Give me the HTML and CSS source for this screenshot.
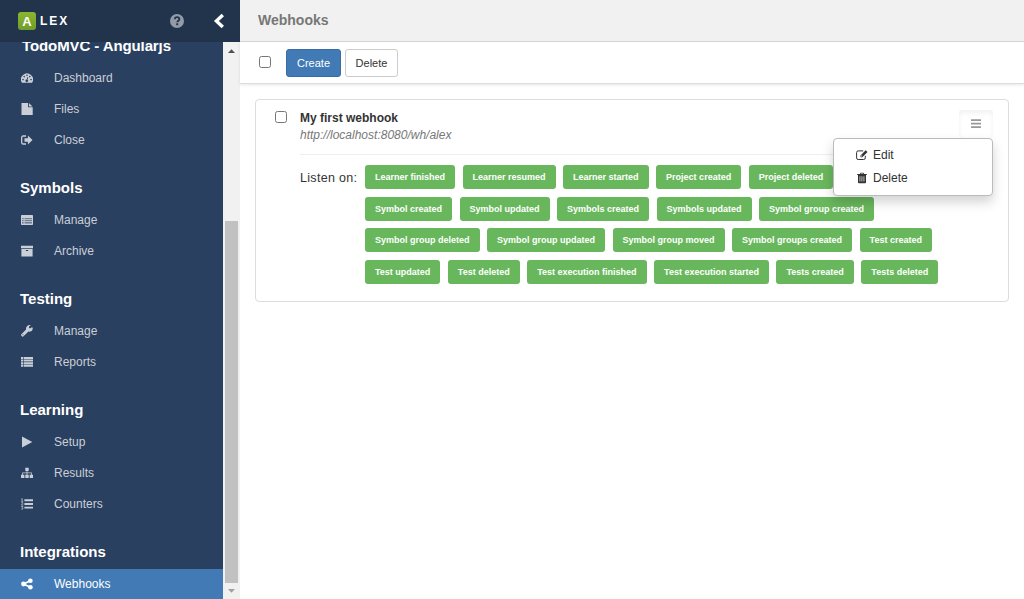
FILE: index.html
```
<!DOCTYPE html>
<html lang="en">
<head>
<meta charset="utf-8">
<title>Webhooks</title>
<link rel="stylesheet" href="styles.css">
</head>
<body>
<div class="app">
  <aside class="sidebar">
    <header class="brand">
      <span class="logo">A</span><span class="brand-name">LEX</span>
      <svg class="help" viewBox="0 0 14 14"><circle cx="7" cy="7" r="7" fill="#929ba7"/><path d="M4.8 5.3C4.9 3.9 5.8 3.2 7 3.2s2.4.8 2.4 2c0 1.6-2.1 1.5-2.1 3.1" fill="none" stroke="#21344c" stroke-width="1.8"/><path d="M6.2 9.3h2v1.9h-2z" fill="#21344c"/></svg>
      <svg class="collapse" viewBox="0 0 12 16"><path d="M9.8 1.9 3.4 8l6.4 6.1" fill="none" stroke="#fff" stroke-width="3.4"/></svg>
    </header>
    <div class="side-body">
      <nav class="nav">
        <h2 class="project">TodoMVC - Angularjs</h2>
        <a class="item"><svg class="icon" viewBox="0 0 12 12"><path fill-rule="evenodd" d="M1 10.8A6 6 0 1 1 11 10.8zM1.2 7.6a.8.8 0 1 0 1.6 0 .8.8 0 0 0-1.6 0M2.4 4.6a.8.8 0 1 0 1.6 0 .8.8 0 0 0-1.6 0M5.2 3.3a.8.8 0 1 0 1.6 0 .8.8 0 0 0-1.6 0M8 4.6a.8.8 0 1 0 1.6 0 .8.8 0 0 0-1.6 0M9.2 7.6a.8.8 0 1 0 1.6 0 .8.8 0 0 0-1.6 0M6.5 4.9 5.7 7.5a1.3 1.3 0 1 0 .8.2l.8-2.6z"/></svg>Dashboard</a>
        <a class="item"><svg class="icon" viewBox="0 0 12 12"><path d="M.5 0H7v4.300h4.700V12H.500zM7.900.1l3.600 3.300H7.900z"/></svg>Files</a>
        <a class="item"><svg class="icon" viewBox="0 0 12 12"><path d="M5 2H2.3Q.7 2 .7 3.600v4.800Q.7 10 2.300 10H5" fill="none" stroke="currentColor" stroke-width="1.300"/><path d="M3.500 4.300h3.400V1.500L11.500 6l-4.600 4.500V7.700H3.500z"/></svg>Close</a>
        <h2>Symbols</h2>
        <a class="item"><svg class="icon" viewBox="0 0 12 12"><path fill-rule="evenodd" d="M.8 1h10.4q.8 0 .8.8v8.400q0 .8-.8.8H.8q-.8 0-.8-.8V1.800Q0 1 .8 1zM1 4v1.200h10V4zM1 6v1.200h10V6zM1 8v1.500h10V8z"/><path d="M2.700 3.500h.8v6.500h-.8z"/><path d="M1 3.800h10v6H1z" opacity=".45"/></svg>Manage</a>
        <a class="item"><svg class="icon" viewBox="0 0 12 12"><path fill-rule="evenodd" d="M0 .8h12v2.500H0zM.4 4h11.200v7.500H.4zM4.900 5v.9h2.300V5z"/></svg>Archive</a>
        <h2>Testing</h2>
        <a class="item"><svg class="icon" viewBox="0 0 12 12"><path fill-rule="evenodd" d="M10.900 2.300 9 3.400 8 2.800V1.600l1.900-1.100A3.400 3.400 0 0 0 5.100 4.400L.6 8.900a1.500 1.500 0 0 0 2.200 2.200L7.400 6.600A3.400 3.400 0 0 0 11.700 3q-.1-.6-.8-.7zM1.500 9.700a.5.5 0 1 0 1 0 .5.5 0 0 0-1 0"/></svg>Manage</a>
        <a class="item"><svg class="icon" viewBox="0 0 12 12"><path d="M0 1h2v2H0zm2.600 0H12v2H2.600zM0 3.600h2v2H0zm2.600 0H12v2H2.600zM0 6.200h2v2H0zm2.600 0H12v2H2.600zM0 8.800h2v2H0zm2.600 0H12v2H2.600z"/></svg>Reports</a>
        <h2>Learning</h2>
        <a class="item"><svg class="icon" viewBox="0 0 12 12"><path d="M1 .5 11.300 6 1 11.500z"/></svg>Setup</a>
        <a class="item"><svg class="icon" viewBox="0 0 12 12"><path d="M4.300.8h3.400v3.300H6.400v1.300h4.400v2.300H12v3.200H8.600V7.700H10V6.200H6.400v1.500h1.300v3.200H4.300V7.700h1.300V6.200H2v1.500h1.400v3.200H0V7.700h1.200V5.400h4.400V4.100H4.300z"/></svg>Results</a>
        <a class="item"><svg class="icon" viewBox="0 0 12 12"><path d="M3.400 1.300H12v1.900H3.400zm0 3.700H12v1.900H3.400zm0 3.700H12v1.900H3.400z"/><path d="M.2 1.200 1.200.6v2.700M.2 3.400h2M.2 4.900q2-.8 1.800.3L.4 7.100h1.900M.2 8.500h1.700l-.9 1q1.500.4.800 1.500-.7.7-1.600.1" fill="none" stroke="currentColor" stroke-width=".7"/></svg>Counters</a>
        <h2>Integrations</h2>
        <a class="item active"><svg class="icon" viewBox="0 0 12 12"><circle cx="2.500" cy="6" r="2.400"/><circle cx="9.400" cy="2.800" r="2.300"/><circle cx="9.400" cy="9.200" r="2.300"/><path d="M9.300 2.800 2.600 6l6.700 3.200" fill="none" stroke="currentColor" stroke-width="1.700"/></svg>Webhooks</a>
      </nav>
      <div class="scrollbar">
        <svg class="arrow" viewBox="0 0 17 17"><path d="M5 11h7L8.500 7.300z" fill="#505050"/></svg>
        <div class="track"><div class="thumb"></div></div>
        <svg class="arrow" viewBox="0 0 17 17"><path d="M5 7h7l-3.500 3.800z" fill="#a0a0a0"/></svg>
      </div>
    </div>
  </aside>
  <main class="main">
    <header class="title">Webhooks</header>
    <div class="toolbar">
      <span class="check"></span>
      <button class="btn primary">Create</button>
      <button class="btn">Delete</button>
    </div>
    <section class="card">
      <span class="check"></span>
      <div class="content">
        <div class="head">
          <div class="info"><div class="name">My first webhook</div><div class="url">http://localhost:8080/wh/alex</div></div>
          <div class="menu-wrap">
            <button class="menu-btn"><svg viewBox="0 0 10 9"><path d="M0 .2h10v1.700H0zm0 3.500h10v1.700H0zm0 3.500h10v1.700H0z" fill="#999"/></svg></button>
            <div class="dropdown">
              <a class="option"><svg viewBox="0 0 12 12"><path d="M9.300 6.800v2.100q0 1.600-1.600 1.600H2.200Q.6 10.500.6 8.900V3.500Q.6 1.900 2.200 1.900h5" fill="none" stroke="#333" stroke-width="1"/><path fill-rule="evenodd" d="M4.500 6.400 9.700 1.200l1.800 1.800-5.200 5.200H4.500zM5.200 6.700v.8h.8l.4-.4-.8-.8z" fill="#333"/></svg>Edit</a>
              <a class="option"><svg viewBox="0 0 12 12"><path fill-rule="evenodd" d="M4 1.900 4.500.7h3L8 1.900h2.800v1H10v7.300q0 1-.9 1H2.900q-.9 0-.9-1V2.900h-.8v-1zm.9 0h2.200l-.3-.5H5.200zM3.600 4.300v5.300h.7V4.300zm2 0v5.300h.7V4.300zm2 0v5.300h.7V4.300z" fill="#333"/></svg>Delete</a>
            </div>
          </div>
        </div>
        <div class="events">
          <div class="listen">Listen on:</div>
          <div class="rows">
            <div class="row"><span class="tag">Learner finished</span><span class="tag">Learner resumed</span><span class="tag">Learner started</span><span class="tag">Project created</span><span class="tag">Project deleted</span></div>
            <div class="row"><span class="tag">Symbol created</span><span class="tag">Symbol updated</span><span class="tag">Symbols created</span><span class="tag">Symbols updated</span><span class="tag">Symbol group created</span></div>
            <div class="row"><span class="tag">Symbol group deleted</span><span class="tag">Symbol group updated</span><span class="tag">Symbol group moved</span><span class="tag">Symbol groups created</span><span class="tag">Test created</span></div>
            <div class="row"><span class="tag">Test updated</span><span class="tag">Test deleted</span><span class="tag">Test execution finished</span><span class="tag">Test execution started</span><span class="tag">Tests created</span><span class="tag">Tests deleted</span></div>
          </div>
        </div>
      </div>
    </section>
  </main>
</div>
</body>
</html>
```
FILE: styles.css
```
* { box-sizing: border-box; }
body { margin: 0; font: 12px/17px "Liberation Sans", Arial, sans-serif; color: #333; background: #fff; }
.app { display: flex; height: 599px; overflow: hidden; }
.sidebar { width: 240px; flex: none; display: flex; flex-direction: column; background: #2a4060; }
.brand { height: 42px; flex: none; display: flex; align-items: center; padding: 0 15px 0 18px; background: #21344c; color: #fff; }
.logo { width: 18px; height: 18px; border-radius: 3px; background: linear-gradient(#8cb52f, #6f9e2a); font-weight: bold; font-size: 13px; line-height: 19px; text-align: center; }
.brand-name { margin-left: 4px; font-weight: bold; font-size: 12px; letter-spacing: 1.900px; }
.help { width: 14px; height: 14px; margin-left: auto; margin-right: 29px; }
.collapse { width: 12px; height: 16px; }
.side-body { flex: 1; min-height: 0; display: flex; }
.nav { flex: 1; overflow: hidden; }
.nav h2 { margin: 22px 0 7px; height: 20px; padding-left: 20px; font-size: 15px; line-height: 20px; color: #fff; }
.nav .project { margin-top: -6px; padding-left: 22px; letter-spacing: -.1px; }
.item { display: flex; align-items: center; height: 31px; padding-left: 21px; color: #cacfd7; }
.item.active { background: #427ab5; color: #fff; }
.icon { width: 12px; height: 12px; margin: 0 21px 1px 0; fill: currentColor; }
.scrollbar { width: 17px; display: flex; flex-direction: column; background: #f1f1f1; }
.arrow { width: 17px; height: 17px; flex: none; }
.track { flex: 1; margin-bottom: -1px; padding: 162px 2px 0; display: flex; }
.thumb { flex: 1; background: #c1c1c1; }
.main { flex: 1; min-width: 0; }
.title { height: 42px; padding-left: 18px; background: #f1f1f1; border-bottom: 1px solid #d8d8d8; color: #777; font-size: 14px; font-weight: bold; line-height: 40px; }
.toolbar { height: 42px; display: flex; align-items: center; padding-left: 19px; border-bottom: 1px solid #ddd; box-shadow: 0 1px 3px #0000001a; }
.check { width: 12px; height: 12px; flex: none; border: 1px solid #767676; border-radius: 2.500px; background: #fff; }
.btn { width: 53px; height: 28px; padding: 0; border: 1px solid #ccc; border-radius: 3px; background: #fff; color: #333; font: 11px/26px "Liberation Sans", Arial, sans-serif; }
.btn.primary { width: 55px; margin: 0 4px 0 15px; border-color: #386ca5; background: #427ab5; color: #fff; }
.toolbar .check { margin-top: -1px; }
.card { margin: 15px 15px 0; height: 203px; display: flex; padding: 0 15px 0 19px; border: 1px solid #ddd; border-radius: 4px; }
.card > .check { margin: 11px 13px 0 0; }
.content { flex: 1; min-width: 0; }
.head { height: 55px; padding-top: 10px; display: flex; justify-content: space-between; border-bottom: 1px solid #eee; }
.name { font-weight: bold; line-height: 17px; }
.url { font-style: italic; line-height: 17px; color: #777; }
.menu-wrap { position: relative; width: 34px; }
.menu-btn { display: flex; width: 34px; height: 28px; padding: 0 0 2px; align-items: center; justify-content: center; border: 0; border-radius: 3px; background: #fff; box-shadow: inset 0 3px 5px #0000000f; }
.menu-btn svg { width: 10px; height: 9px; }
.dropdown { position: absolute; top: 28px; right: 0; width: 160px; height: 58px; padding-top: 5px; border: 1px solid #bbb; border-radius: 4px; background: #fff; box-shadow: 0 6px 12px #0000002d; }
.option { display: flex; align-items: center; height: 23px; padding-left: 22px; }
.option svg { width: 12px; height: 12px; margin: 0 5px 1px 0; }
.events { display: flex; padding-top: 10px; }
.listen { width: 65px; flex: none; line-height: 26px; letter-spacing: .3px; font-size: 12.500px; }
.rows { display: grid; grid-auto-rows: 31.700px; }
.row { display: flex; gap: 7.500px; }
.tag { height: 24px; padding: 0 10px; border-radius: 3px; background: #69b75d; color: #fff; font-size: 9px; font-weight: bold; line-height: 24px; white-space: nowrap; }
```
